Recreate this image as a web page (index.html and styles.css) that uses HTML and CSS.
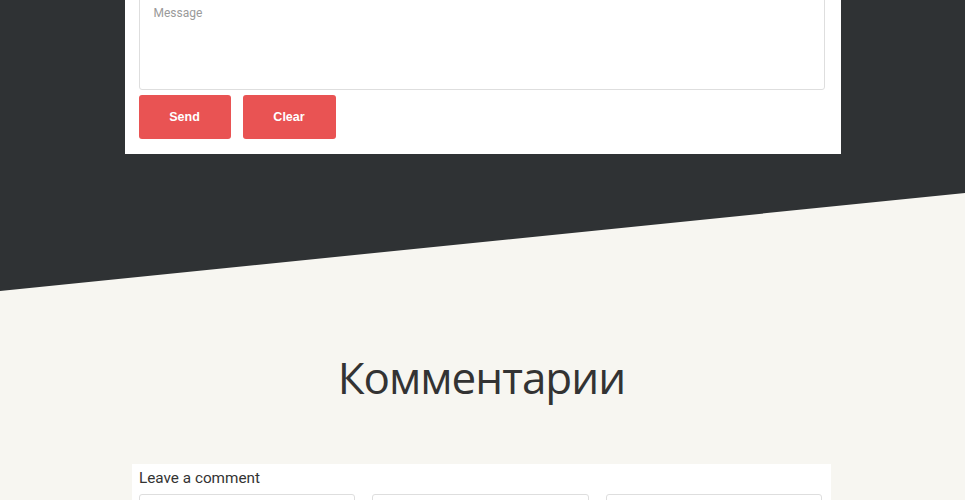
FILE: index.html
```
<!DOCTYPE html>
<html lang="ru">
<head>
<meta charset="utf-8">
<title>Комментарии</title>
<link rel="stylesheet" href="styles.css">
</head>
<body>
<section class="dark">
  <form class="card">
    <textarea class="message" placeholder="Message"></textarea>
    <div class="actions">
      <button type="button" class="btn">Send</button>
      <button type="reset" class="btn btn-wide">Clear</button>
    </div>
  </form>
</section>
<section class="comments">
  <h2 class="title">Комментарии</h2>
  <div class="panel">
    <div class="panel-label">Leave a comment</div>
    <div class="fields">
      <input class="field" type="text">
      <input class="field" type="text">
      <input class="field" type="text">
    </div>
  </div>
</section>
</body>
</html>
```

FILE: styles.css
```
html, body {
  margin: 0;
  padding: 0;
}
body {
  background: #f7f6f1;
  font-family: Roboto, "Liberation Sans", Arial, sans-serif;
  overflow: hidden;
}
.dark {
  background: #2f3234;
  height: 291px;
  clip-path: polygon(0 0, 100% 0, 100% 193px, 0 291px);
  display: flex;
  justify-content: center;
  align-items: flex-start;
}
.card {
  width: 716px;
  box-sizing: border-box;
  background: #fff;
  padding: 0 16px 15px 14px;
  margin-top: -30px;
  display: flex;
  flex-direction: column;
}
.message {
  display: block;
  box-sizing: border-box;
  width: 686px;
  height: 120px;
  margin: 0;
  border: 1px solid #dedede;
  border-radius: 3px;
  padding: 8px 14px;
  padding-top: 35px;
  font-family: Roboto, "Liberation Sans", Arial, sans-serif;
  font-size: 12px;
  color: #555;
  resize: none;
  outline: none;
}
.message::placeholder {
  color: #9a9a9a;
}
.actions {
  display: flex;
  gap: 12px;
  margin-top: 5px;
}
.btn {
  width: 92px;
  height: 44px;
  border: 0;
  border-radius: 3px;
  background: #e95353;
  color: #fff;
  font-family: "Liberation Sans", Arial, sans-serif;
  font-weight: bold;
  font-size: 12.5px;
  padding: 0;
}
.btn-wide {
  width: 93px;
}
.comments {
  padding-top: 57px;
  display: flex;
  flex-direction: column;
  align-items: center;
}
.title {
  margin: 0;
  font-family: "Open Sans", "Noto Sans", sans-serif;
  font-weight: 400;
  font-size: 44px;
  line-height: 58px;
  color: #333;
  letter-spacing: -1px;
  padding-right: 2px;
}
.panel {
  margin-top: 58px;
  width: 699px;
  box-sizing: border-box;
  background: #fff;
  padding: 5px 9px 10px 7px;
  margin-left: -2px;
}
.panel-label {
  font-size: 15.3px;
  line-height: 19px;
  color: #333;
}
.fields {
  display: grid;
  grid-template-columns: repeat(3, 1fr);
  gap: 17px;
  margin-top: 6px;
}
.field {
  box-sizing: border-box;
  width: 100%;
  height: 34px;
  border: 1px solid #dedede;
  border-radius: 3px;
  margin: 0;
  background: #fff;
}
```
